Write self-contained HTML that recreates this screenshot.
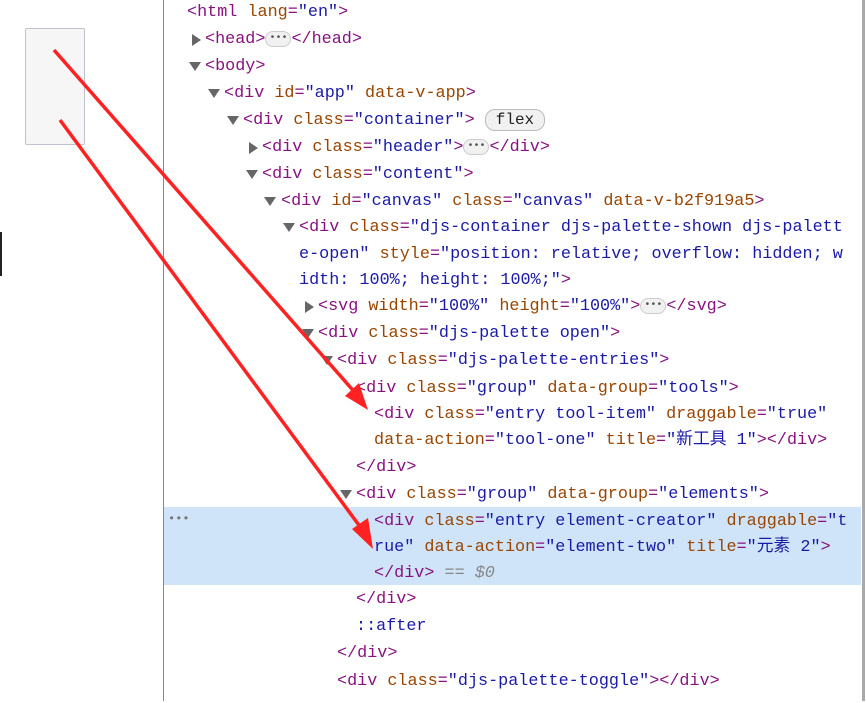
<!DOCTYPE html>
<html><head><meta charset="utf-8"><style>
body{margin:0;width:866px;height:701px;overflow:hidden;background:#fff;position:relative;font-family:"Liberation Mono","Noto Sans CJK SC",monospace;}
.left{position:absolute;left:0;top:0;width:163px;height:701px;background:#fff;border-right:1px solid #888;}
.box{position:absolute;left:25px;top:28px;width:58px;height:115px;background:#f6f6f6;border:1px solid #c0c2cc;border-radius:2px;}
.cur{position:absolute;left:0;top:232px;width:2px;height:44px;background:#222;}
.w{position:absolute;left:0;top:2px;width:866px;height:701px;}
.l{position:absolute;font-size:16.8px;line-height:26px;white-space:pre;color:#881280;}
.hl{position:absolute;left:164px;top:507px;width:697px;height:78px;background:#cfe4f8;}
.t{color:#881280}.a{color:#994500}.v{color:#1a1aa6}.g{color:#888;font-style:italic}
.tri{position:absolute;width:0;height:0;}
.dn{border-left:6px solid transparent;border-right:6px solid transparent;border-top:9px solid #666;}
.rt{border-top:6px solid transparent;border-bottom:6px solid transparent;border-left:9px solid #666;}
.pill{display:inline-block;border:1px solid #ccc;background:#f1f1f1;border-radius:9px;font-size:10px;line-height:14px;padding:0 3px;color:#555;vertical-align:middle}
.flex{display:inline-block;border:1px solid #bbb;background:#f1f1f1;border-radius:10px;line-height:20px;padding:0 10px;color:#222;font-size:16px}
.sb{position:absolute;left:862px;top:0;width:3px;height:701px;background:#aaa;}
</style></head><body>
<div class="left"><div class="box"></div><div class="cur"></div></div>
<div class="hl"></div>
<div class="sb"></div>
<div class="w">
<div class="l" style="left:168px;top:504px;color:#777;font-size:12px">•••</div>
<div class="l" style="left:187px;top:-2px">&lt;html <span class="a">lang</span>=<span class="v">"en"</span>&gt;</div>
<div class="tri rt" style="left:192px;top:32px"></div>
<div class="l" style="left:205px;top:25px">&lt;head&gt;<span class="pill">•••</span>&lt;/head&gt;</div>
<div class="tri dn" style="left:189px;top:60px"></div>
<div class="l" style="left:205px;top:52px">&lt;body&gt;</div>
<div class="tri dn" style="left:208px;top:87px"></div>
<div class="l" style="left:224px;top:79px">&lt;div <span class="a">id</span>=<span class="v">"app"</span> <span class="a">data-v-app</span>&gt;</div>
<div class="tri dn" style="left:227px;top:114px"></div>
<div class="l" style="left:243px;top:106px">&lt;div <span class="a">class</span>=<span class="v">"container"</span>&gt; <span class="flex">flex</span></div>
<div class="tri rt" style="left:249px;top:140px"></div>
<div class="l" style="left:262px;top:133px">&lt;div <span class="a">class</span>=<span class="v">"header"</span>&gt;<span class="pill">•••</span>&lt;/div&gt;</div>
<div class="tri dn" style="left:246px;top:168px"></div>
<div class="l" style="left:262px;top:160px">&lt;div <span class="a">class</span>=<span class="v">"content"</span>&gt;</div>
<div class="tri dn" style="left:264px;top:195px"></div>
<div class="l" style="left:281px;top:187px">&lt;div <span class="a">id</span>=<span class="v">"canvas"</span> <span class="a">class</span>=<span class="v">"canvas"</span> <span class="a">data-v-b2f919a5</span>&gt;</div>
<div class="tri dn" style="left:283px;top:221px"></div>
<div class="l" style="left:299px;top:213px">&lt;div <span class="a">class</span>=<span class="v">"djs-container djs-palette-shown djs-palett</span></div>
<div class="l" style="left:299px;top:240px"><span class="v">e-open"</span> <span class="a">style</span>=<span class="v">"position: relative; overflow: hidden; w</span></div>
<div class="l" style="left:299px;top:266px"><span class="v">idth: 100%; height: 100%;"</span>&gt;</div>
<div class="tri rt" style="left:305px;top:299px"></div>
<div class="l" style="left:318px;top:292px">&lt;svg <span class="a">width</span>=<span class="v">"100%"</span> <span class="a">height</span>=<span class="v">"100%"</span>&gt;<span class="pill">•••</span>&lt;/svg&gt;</div>
<div class="tri dn" style="left:302px;top:327px"></div>
<div class="l" style="left:318px;top:319px">&lt;div <span class="a">class</span>=<span class="v">"djs-palette open"</span>&gt;</div>
<div class="tri dn" style="left:321px;top:354px"></div>
<div class="l" style="left:337px;top:346px">&lt;div <span class="a">class</span>=<span class="v">"djs-palette-entries"</span>&gt;</div>
<div class="l" style="left:356px;top:374px">&lt;div <span class="a">class</span>=<span class="v">"group"</span> <span class="a">data-group</span>=<span class="v">"tools"</span>&gt;</div>
<div class="l" style="left:374px;top:400px">&lt;div <span class="a">class</span>=<span class="v">"entry tool-item"</span> <span class="a">draggable</span>=<span class="v">"true"</span></div>
<div class="l" style="left:374px;top:426px"><span class="a">data-action</span>=<span class="v">"tool-one"</span> <span class="a">title</span>=<span class="v">"新工具 1"</span>&gt;&lt;/div&gt;</div>
<div class="l" style="left:356px;top:453px">&lt;/div&gt;</div>
<div class="tri dn" style="left:340px;top:488px"></div>
<div class="l" style="left:356px;top:480px">&lt;div <span class="a">class</span>=<span class="v">"group"</span> <span class="a">data-group</span>=<span class="v">"elements"</span>&gt;</div>
<div class="l" style="left:374px;top:507px">&lt;div <span class="a">class</span>=<span class="v">"entry element-creator"</span> <span class="a">draggable</span>=<span class="v">"t</span></div>
<div class="l" style="left:374px;top:533px"><span class="v">rue"</span> <span class="a">data-action</span>=<span class="v">"element-two"</span> <span class="a">title</span>=<span class="v">"元素 2"</span>&gt;</div>
<div class="l" style="left:374px;top:559px">&lt;/div&gt; <span class="g">== $0</span></div>
<div class="l" style="left:356px;top:585px">&lt;/div&gt;</div>
<div class="l" style="left:356px;top:612px;color:#1a1aa6">::after</div>
<div class="l" style="left:337px;top:639px">&lt;/div&gt;</div>
<div class="l" style="left:337px;top:667px">&lt;div <span class="a">class</span>=<span class="v">"djs-palette-toggle"</span>&gt;&lt;/div&gt;</div>
</div>
<svg style="position:absolute;left:0;top:0" width="866" height="701">
<line x1="54" y1="50" x2="358" y2="396" stroke="#f22" stroke-width="3.5"/>
<polygon points="368,410 345,396 359,383" fill="#f22"/>
<line x1="60" y1="120" x2="364" y2="532" stroke="#f22" stroke-width="3.5"/>
<polygon points="373,549 352,529 368,518" fill="#f22"/>
</svg>
</body></html>
